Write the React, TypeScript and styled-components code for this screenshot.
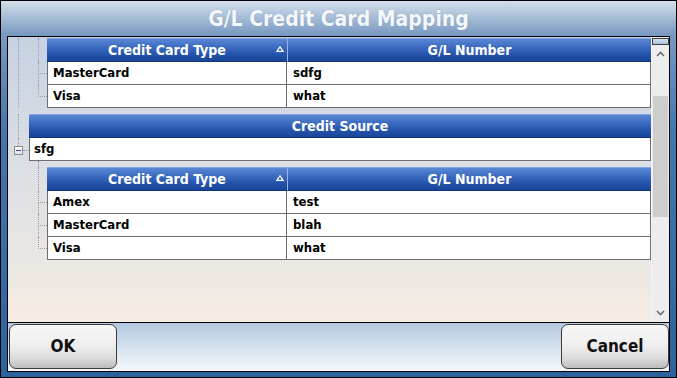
import styled, { createGlobalStyle } from "styled-components";

const GlobalStyle = createGlobalStyle`
  html, body {
    margin: 0;
    padding: 0;
    width: 677px;
    height: 378px;
    overflow: hidden;
  }
  body {
    font-family: "DejaVu Sans Condensed", "DejaVu Sans", Tahoma, sans-serif;
  }
`;

const Window = styled.div`
  width: 677px;
  height: 378px;
  box-sizing: border-box;
  border: 1px solid #000;
  background: linear-gradient(to bottom, #d3dfeb 0px, #7899c1 34px, #4377ae 130px, #2b63a0 100%);
  display: flex;
  flex-direction: column;
  padding: 0 6px 5px 6px;
`;

const TitleBar = styled.div`
  height: 35px;
  flex: none;
  display: flex;
  align-items: center;
  justify-content: center;
  color: #f4f7fb;
  font-weight: bold;
  font-size: 21px;
  text-shadow: 0 0 1px rgba(60, 90, 130, 0.4);
`;

const Panel = styled.div`
  flex: 1;
  border: 1px solid #000;
  display: flex;
  flex-direction: column;
  min-height: 0;
`;

const Content = styled.div`
  height: 285px;
  flex: none;
  display: flex;
  border-bottom: 1px solid #000;
`;

const TreeView = styled.div`
  flex: 1;
  overflow: hidden;
  padding-top: 1px;
  background: linear-gradient(to bottom, #c6d2e2 0%, #dcdfe5 45%, #ebe7e3 80%, #f6ece3 100%);
`;

/* ---- tree connectors ---- */

const Band = styled.div<{ $gap?: boolean }>`
  display: flex;
  margin-top: ${(p) => (p.$gap ? 6 : 0)}px;
`;

const Trunk = styled.div<{ $line: boolean }>`
  flex: none;
  box-sizing: border-box;
  margin-left: 10px;
  width: 11px;
  border-left: ${(p) => (p.$line ? "1px dotted #9a9a9a" : "none")};
`;

const NodeGutter = styled.div`
  width: 21px;
  flex: none;
  display: flex;
  flex-direction: column;
`;

const TrunkEnd = styled.div`
  height: 8px;
  margin-left: 10px;
  border-left: 1px dotted #9a9a9a;
`;

const ToggleRow = styled.div`
  display: flex;
  align-items: center;
  padding-left: 6px;
`;

const ToggleBox = styled.div`
  width: 7px;
  height: 7px;
  border: 1px solid #8c8c8c;
  background: linear-gradient(#ffffff, #dfe3ea);
  display: flex;
  align-items: center;
  justify-content: center;
  &::after {
    content: "";
    width: 5px;
    height: 1px;
    background: #2a4f8c;
  }
`;

const ToggleLink = styled.div`
  flex: 1;
  border-top: 1px dotted #9a9a9a;
`;

const Group = styled.div`
  flex: 1;
  display: flex;
  flex-direction: column;
`;

const GridRow = styled.div`
  display: grid;
  grid-template-columns: 18px 240px 1fr;
`;

const Stub = styled.div`
  display: flex;
  flex-direction: column;
`;

const StubTop = styled.div`
  flex: 1;
  margin-left: 9px;
  border-left: 1px dotted #9a9a9a;
  border-bottom: 1px dotted #9a9a9a;
`;

const StubBottom = styled.div<{ $line: boolean }>`
  flex: 1;
  margin-left: 9px;
  border-left: ${(p) => (p.$line ? "1px dotted #9a9a9a" : "none")};
`;

const StubLine = styled.div<{ $h?: number }>`
  margin-left: 9px;
  height: ${(p) => (p.$h ? `${p.$h}px` : "auto")};
  border-left: 1px dotted #9a9a9a;
`;

/* ---- grid cells ---- */

const HeadCell = styled.div<{ $first?: boolean }>`
  height: 24px;
  box-sizing: border-box;
  background: linear-gradient(to bottom, #5a88d4 0%, #3d6cc2 35%, #2453aa 70%, #1a4699 100%);
  border-top: 1px solid #7fa2de;
  border-bottom: 1px solid #0f347c;
  border-left: ${(p) => (p.$first ? "none" : "1px solid #9bb3e0")};
  color: #fff;
  font-weight: bold;
  font-size: 14px;
  display: grid;
  grid-template-columns: 1fr auto 1fr;
  align-items: center;
`;

const HeadText = styled.span`
  grid-column: 2;
  padding-bottom: 1px;
`;

const SortMark = styled.svg`
  grid-column: 3;
  justify-self: end;
  margin-right: 3px;
  margin-bottom: 2px;
`;

const Cell = styled.div<{ $first?: boolean }>`
  height: 23px;
  box-sizing: border-box;
  background: #fff;
  border-bottom: 1px solid #6e6e6e;
  border-right: 1px solid #6e6e6e;
  border-left: ${(p) => (p.$first ? "1px solid #6e6e6e" : "none")};
  padding: 0 0 2px ${(p) => (p.$first ? 5 : 6)}px;
  display: flex;
  align-items: center;
  font-weight: bold;
  font-size: 13px;
  color: #000;
`;

const BandHeader = styled(HeadCell)`
  flex: 1;
`;

const NodeCell = styled(Cell)`
  flex: 1;
  border-left: 1px solid #6e6e6e;
  padding-left: 4px;
`;

/* ---- scrollbar ---- */

const ScrollBar = styled.div`
  width: 18px;
  flex: none;
  background: #ededed;
  border-left: 1px solid #f4f4f4;
  box-sizing: border-box;
  display: flex;
  flex-direction: column;
  padding-top: 1px;
`;

const Gripper = styled.div`
  height: 5px;
  border: 1px solid #404040;
  background: linear-gradient(#d7e2f0, #a9bfdc);
`;

const Arrow = styled.div`
  height: 18px;
  display: flex;
  align-items: center;
  justify-content: center;
`;

const Thumb = styled.div<{ $offset: number }>`
  margin: ${(p) => p.$offset}px 1px 0 1px;
  height: 121px;
  background: #cdcdcd;
`;

const Track = styled.div`
  flex: 1;
`;

/* ---- buttons ---- */

const ButtonBar = styled.div`
  flex: 1;
  display: flex;
  justify-content: space-between;
  align-items: flex-start;
  padding: 1px 0 0 1px;
  background: linear-gradient(to bottom, #b3c7e0 0%, #d5e1ee 50%, #f4f7fb 100%);
`;

const Button = styled.button`
  width: 108px;
  height: 45px;
  border: 1px solid #3c3c3c;
  border-radius: 7px;
  background: linear-gradient(to bottom, #f7f7f7 0%, #efefef 45%, #dedede 75%, #bcbcbc 100%);
  font-family: "DejaVu Sans Condensed", "DejaVu Sans", sans-serif;
  font-weight: bold;
  font-size: 17px;
  color: #111;
  padding: 0 0 2px;
`;

type Card = { type: string; gl: string };

const Chevron = ({ up }: { up?: boolean }) => (
  <svg width="9" height="6" viewBox="0 0 9 6">
    <path
      d={up ? "M1 5 L4.5 1.5 L8 5" : "M1 1 L4.5 4.5 L8 1"}
      fill="none"
      stroke="#6b6b6b"
      strokeWidth="1.6"
    />
  </svg>
);

const CardTable = ({ rows, lead }: { rows: Card[]; lead?: boolean }) => (
  <Group>
    {lead && (
      <GridRow>
        <StubLine $h={6} />
      </GridRow>
    )}
    <GridRow>
      <StubLine />
      <HeadCell $first>
        <HeadText>Credit Card Type</HeadText>
        <SortMark width="8" height="6" viewBox="0 0 8 6">
          <path d="M4 0.8 L7.2 5.3 L0.8 5.3 Z" fill="none" stroke="#fff" strokeWidth="1.2" />
        </SortMark>
      </HeadCell>
      <HeadCell>
        <HeadText>G/L Number</HeadText>
      </HeadCell>
    </GridRow>
    {rows.map((r, i) => (
      <GridRow key={r.type}>
        <Stub>
          <StubTop />
          <StubBottom $line={i < rows.length - 1} />
        </Stub>
        <Cell $first>{r.type}</Cell>
        <Cell>{r.gl}</Cell>
      </GridRow>
    ))}
  </Group>
);

const App = () => (
  <>
    <GlobalStyle />
    <Window>
      <TitleBar>G/L Credit Card Mapping</TitleBar>
      <Panel>
        <Content>
          <TreeView>
            <Band>
              <Trunk $line />
              <CardTable
                rows={[
                  { type: "MasterCard", gl: "sdfg" },
                  { type: "Visa", gl: "what" },
                ]}
              />
            </Band>
            <Band $gap>
              <Trunk $line />
              <BandHeader $first>
                <HeadText>Credit Source</HeadText>
              </BandHeader>
            </Band>
            <Band>
              <NodeGutter>
                <TrunkEnd />
                <ToggleRow>
                  <ToggleBox />
                  <ToggleLink />
                </ToggleRow>
              </NodeGutter>
              <NodeCell>sfg</NodeCell>
            </Band>
            <Band>
              <Trunk $line={false} />
              <CardTable
                lead
                rows={[
                  { type: "Amex", gl: "test" },
                  { type: "MasterCard", gl: "blah" },
                  { type: "Visa", gl: "what" },
                ]}
              />
            </Band>
          </TreeView>
          <ScrollBar>
            <Gripper />
            <Arrow>
              <Chevron up />
            </Arrow>
            <Thumb $offset={33} />
            <Track />
            <Arrow>
              <Chevron />
            </Arrow>
          </ScrollBar>
        </Content>
        <ButtonBar>
          <Button>OK</Button>
          <Button>Cancel</Button>
        </ButtonBar>
      </Panel>
    </Window>
  </>
);

export default App;
